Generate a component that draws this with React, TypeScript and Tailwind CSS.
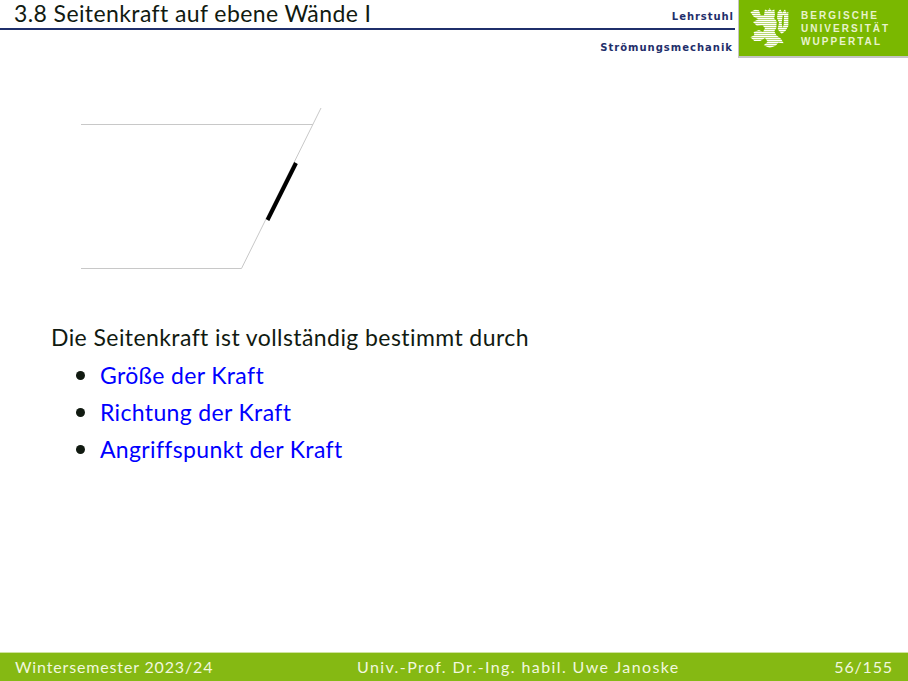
const sans = "font-['Lato',sans-serif]";

// coordinates taken from the 3x crop of the crest
const LION =
  "M34 36 L48 29 L60 31 L65 46 L75 46 L78 28 L86 32 L92 25 L98 32 L106 28 L108 46 L105 54 L113 64 L112 84 L106 94 L112 106 L126 116 L134 130 L118 128 L110 137 L92 144 L74 136 L86 125 L78 114 L64 123 L46 123 L34 112 L46 106 L44 96 L60 90 L72 96 L78 84 L70 76 L54 78 L42 66 L58 58 L44 50 Z";
const TAIL = "M116 36 L124 28 L130 38 L138 28 L142 38 L148 36 L148 78 L140 92 L128 102 L116 88 L120 68 L114 54 Z";

function Logo() {
  return (
    <svg width="60" height="56" viewBox="0 0 180 168" className="shrink-0">
      <defs>
        <pattern id="stripes" width="6" height="6" patternUnits="userSpaceOnUse">
          <rect width="6" height="4" fill="#ffffff" />
          <rect y="4" width="6" height="2" fill="#c4dd85" />
        </pattern>
      </defs>
      <path d={LION} fill="url(#stripes)" />
      <path d={TAIL} fill="url(#stripes)" />
      <path d="M131 46 L135 46 L134 74 L131 84 L128 70 Z" fill="#7ab800" />
    </svg>
  );
}

function Diagram() {
  return (
    <svg width="260" height="180" viewBox="0 0 260 180" className="ml-[70px] block">
      <path d="M11 30.5 H243" stroke="#c8c8c8" fill="none" />
      <path d="M11 174.5 H171.5 L251 14" stroke="#c8c8c8" fill="none" />
      <path d="M197.5 126 L226 69" stroke="#000000" strokeWidth="4" fill="none" />
    </svg>
  );
}

const items = ["Größe der Kraft", "Richtung der Kraft", "Angriffspunkt der Kraft"];

export default function App() {
  return (
    <div className={`flex h-[681px] w-[908px] flex-col bg-white ${sans}`}>
      {/* header */}
      <header className="flex h-[58px] shrink-0">
        <div className="mr-[3px] flex-1">
          <div className="flex h-[30px] items-center justify-between border-b-2 border-[#1f2f6b] pb-[1px] pl-[14px]">
            <span className="text-[23px] leading-none tracking-[0.4px] text-[#111a11]">
              3.8 Seitenkraft auf ebene Wände I
            </span>
            <span className="mr-[1px] mt-[5px] font-['DejaVu_Sans',sans-serif] text-[10px] font-bold tracking-[0.95px] text-[#1f2f6b]">
              Lehrstuhl
            </span>
          </div>
          <div className="pr-[2px] pt-[13px] text-right font-['DejaVu_Sans',sans-serif] text-[10px] font-bold leading-none tracking-[1px] text-[#1f2f6b]">
            Strömungsmechanik
          </div>
        </div>
        <div className="flex w-[170px] items-center border-b-2 border-l border-[#c4c4c4] bg-[#7ab800]">
          <Logo />
          <div className="ml-[2px] font-['Liberation_Sans',sans-serif] text-[10px] font-bold leading-[13px] tracking-[2.05px] text-[#e8f3cc]">
            <div>BERGISCHE</div>
            <div>UNIVERSITÄT</div>
            <div>WUPPERTAL</div>
          </div>
        </div>
      </header>

      {/* content */}
      <main className="flex-1 pt-[36px]">
        <Diagram />
        <p className="ml-[51px] mt-[48px] text-[23px] leading-[30px] tracking-[0.42px] text-[#111a11]">
          Die Seitenkraft ist vollständig bestimmt durch
        </p>
        <ul className="ml-[76px] mt-[8px] flex flex-col gap-[7px]">
          {items.map((item) => (
            <li key={item} className="flex items-center gap-[15px] text-[23px] leading-[30px] tracking-[0.35px] text-[#0000ff]">
              <span className="size-[9px] rounded-full bg-[#111a11]" />
              {item}
            </li>
          ))}
        </ul>
      </main>

      {/* footer */}
      <footer className="flex h-[29px] shrink-0 items-center border-t border-[#cfe3a0] bg-[#85b913] pl-[15px] pr-[15px] text-[16px] tracking-[0.85px] text-[#f1f7df]">
        <span className="w-[342px]">Wintersemester 2023/24</span>
        <span className="flex-1 tracking-[1.4px]">Univ.-Prof. Dr.-Ing. habil. Uwe Janoske</span>
        <span>56/155</span>
      </footer>
    </div>
  );
}
